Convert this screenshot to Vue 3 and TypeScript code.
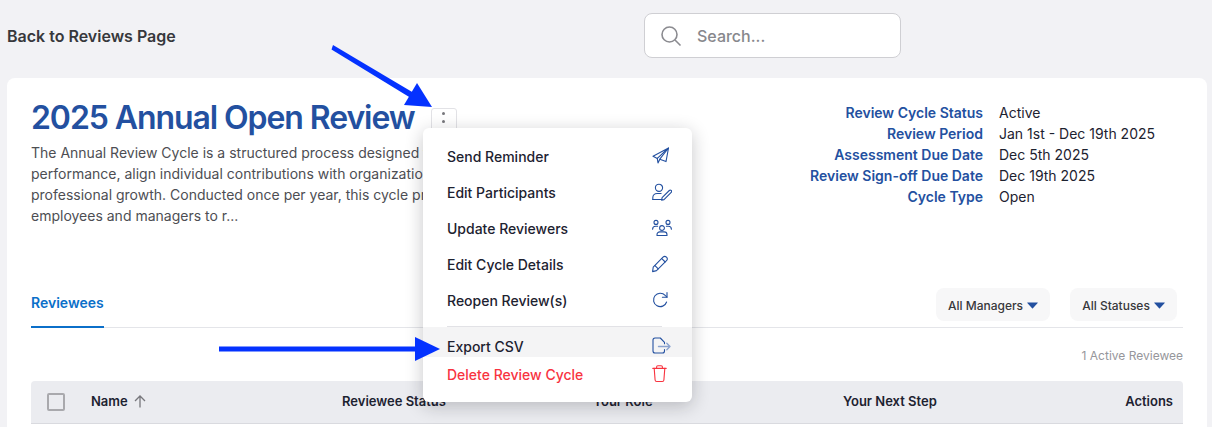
<script setup lang="ts">
interface MenuItem {
  label: string
  paths: string[]
}

const reviewMeta = [
  { label: 'Review Cycle Status', value: 'Active' },
  { label: 'Review Period', value: 'Jan 1st - Dec 19th 2025' },
  { label: 'Assessment Due Date', value: 'Dec 5th 2025' },
  { label: 'Review Sign-off Due Date', value: 'Dec 19th 2025' },
  { label: 'Cycle Type', value: 'Open' },
]

const menuItems: MenuItem[] = [
  {
    label: 'Send Reminder',
    paths: ['M16.5 1 1 9.2l4.3 2.2L16.5 1Z', 'M16.5 1 14 14.6l-6.2-2.4L16.5 1Z', 'M5.3 11.4 6 16l1.8-3.8'],
  },
  {
    label: 'Edit Participants',
    paths: [
      'M7 1.2a3.6 3.6 0 1 1 0 7.2 3.6 3.6 0 0 1 0-7.2Z',
      'M.8 16.5v-1.7c0-2.4 1.9-4.3 4.3-4.3h4',
      'M.8 16.5h9',
      'M12 16.6l-2.4.5.5-2.4 7.2-7.2a1.3 1.3 0 0 1 1.9 1.9L12 16.6Z',
    ],
  },
  {
    label: 'Update Reviewers',
    paths: [
      'M10 6.6a2.4 2.4 0 1 1 0 4.8 2.4 2.4 0 0 1 0-4.8Z',
      'M5 16.5v-.8c0-1.6 1.3-2.8 2.8-2.8h4.4c1.5 0 2.8 1.2 2.8 2.8v.8H5Z',
      'M4 1.4a2 2 0 1 1 0 4 2 2 0 0 1 0-4Z',
      'M16 1.4a2 2 0 1 1 0 4 2 2 0 0 1 0-4Z',
      'M.6 10.2c0-1.7 1.3-3 3-3h2',
      'M19.4 10.2c0-1.7-1.3-3-3-3h-2',
    ],
  },
  {
    label: 'Edit Cycle Details',
    paths: [
      'M1.2 12.2 11 2.2a2.4 2.4 0 0 1 3.5 3.4l-10 10-3.9 1 .6-4.4Z',
      'M9.8 3.6l3.4 3.4',
      'M3 10.6l3.2 3.2',
    ],
  },
  {
    label: 'Reopen Review(s)',
    paths: ['M14.6 11a6.7 6.7 0 1 1-1.4-6.6L15 6.2', 'M15 1.6v4.6h-4.6'],
  },
]

const exportPaths = ['M12.5 6.800V5.400L8.300 1H3a2 2 0 0 0-2 2v11a2 2 0 0 0 2 2h7.500a2 2 0 0 0 2-2v-1.500']
</script>

<template>
  <div class="page">
    <header class="top-bar">
      <span class="back-link">Back to Reviews Page</span>
      <label class="search">
        <svg class="search__icon" width="22" height="22" viewBox="0 0 22 22" fill="none">
          <circle cx="9.5" cy="9.5" r="7.5" />
          <path d="M15 15l5.5 5.5" />
        </svg>
        <input class="search__input" type="text" placeholder="Search..." />
      </label>
    </header>

    <main class="card">
      <section class="summary">
        <div class="summary__main">
          <div class="title-row">
            <h1 class="title">2025 Annual Open Review</h1>
            <button class="more-button" type="button" aria-label="More actions">
              <span></span><span></span><span></span>
            </button>
          </div>
          <p class="description">
            The Annual Review Cycle is a structured process designed to evaluate employee
            performance, align individual contributions with organizational goals, and foster
            professional growth. Conducted once per year, this cycle provides a chance for
            employees and managers to r...
          </p>
        </div>
        <dl class="meta">
          <template v-for="row in reviewMeta" :key="row.label">
            <dt class="meta__label">{{ row.label }}</dt>
            <dd class="meta__value">{{ row.value }}</dd>
          </template>
        </dl>
      </section>

      <nav class="tabs">
        <span class="tabs__active">Reviewees</span>
        <div class="filters">
          <button class="filter filter--managers" type="button">
            All Managers
            <svg width="11" height="7" viewBox="0 0 11 7"><path d="M.6.4h9.8a.4.4 0 0 1 .3.7L5.9 6.2a.5.5 0 0 1-.8 0L.3 1.1A.4.4 0 0 1 .6.4Z" /></svg>
          </button>
          <button class="filter filter--statuses" type="button">
            All Statuses
            <svg width="11" height="7" viewBox="0 0 11 7"><path d="M.6.4h9.8a.4.4 0 0 1 .3.7L5.9 6.2a.5.5 0 0 1-.8 0L.3 1.1A.4.4 0 0 1 .6.4Z" /></svg>
          </button>
        </div>
      </nav>

      <p class="count">1 Active Reviewee</p>

      <div class="table-head">
        <span class="checkbox"></span>
        <span class="table-head__name">
          Name
          <svg width="12" height="13" viewBox="0 0 12 13" fill="none"><path d="M6 12.5V1.2M1 6l5-5 5 5" /></svg>
        </span>
        <span>Reviewee Status</span>
        <span>Your Role</span>
        <span>Your Next Step</span>
        <span class="table-head__actions">Actions</span>
      </div>
    </main>

    <div class="menu">
      <div v-for="item in menuItems" :key="item.label" class="menu__item">
        <span>{{ item.label }}</span>
        <svg class="menu__icon" width="20" height="18" viewBox="0 0 20 18" fill="none">
          <path v-for="d in item.paths" :key="d" :d="d" />
        </svg>
      </div>
      <hr class="menu__divider" />
      <div class="menu__item menu__item--export">
        <span>Export CSV</span>
        <svg class="menu__icon" width="20" height="18" viewBox="0 0 20 18" fill="none">
          <path v-for="d in exportPaths" :key="d" :d="d" />
          <path class="menu__icon-faded" d="M6.500 9.500h11.500M14.800 6.300l3.200 3.200-3.200 3.200" />
        </svg>
      </div>
      <div class="menu__item menu__item--delete">
        <span>Delete Review Cycle</span>
        <svg class="menu__icon" width="20" height="18" viewBox="0 0 20 18" fill="none">
          <path d="M.8 3.4h13.4M4.6 3.200V2a1.200 1.200 0 0 1 1.200-1.200h3.400A1.200 1.200 0 0 1 10.400 2v1.200" />
          <path d="M2.200 3.400l.9 11.600a1.600 1.600 0 0 0 1.600 1.500h5.600a1.600 1.600 0 0 0 1.600-1.500l.9-11.600" />
        </svg>
      </div>
    </div>

    <svg class="annotations" width="1212" height="427" viewBox="0 0 1212 427">
      <path d="M333 45 413 92.500 L410 97.500 331.500 49.500Z" />
      <path d="M432 107 404 105 417 83Z" />
      <path d="M219 346.500H416V351.500H219Z" />
      <path d="M440 349 415 337V361Z" />
    </svg>
  </div>
</template>

<style scoped>
.page {
  position: relative;
  width: 1212px;
  height: 427px;
  overflow: hidden;
  background: #f2f2f5;
  font-family: Inter, "Liberation Sans", sans-serif;
  color: #1d2230;
}

.top-bar {
  display: grid;
  grid-template-columns: 637px 257px;
  align-items: center;
  height: 78px;
  padding: 0 0 7px 7px;
  box-sizing: border-box;
}

.back-link {
  font-size: 16px;
  font-weight: 600;
  color: #37383c;
}

.search {
  display: flex;
  align-items: center;
  gap: 13px;
  height: 45px;
  padding-left: 15px;
  box-sizing: border-box;
  border: 1px solid #cfcfd3;
  border-radius: 8px;
  background: #ffffff;
}

.search__icon {
  flex: none;
  stroke: #8b8b90;
  stroke-width: 1.6;
}

.search__input {
  flex: 1;
  min-width: 0;
  border: 0;
  outline: 0;
  background: transparent;
  font: 500 16px Inter, "Liberation Sans", sans-serif;
}

.search__input::placeholder {
  color: #87878c;
  opacity: 1;
}

.card {
  height: 400px;
  margin: 0 5px 0 7px;
  padding: 20px 24px 0;
  border-radius: 8px;
  background: #ffffff;
}

.summary {
  display: grid;
  grid-template-columns: 1fr 373px;
  height: 184px;
}

.title-row {
  display: flex;
  align-items: flex-start;
  gap: 16px;
}

.title {
  margin: 0;
  font-size: 32px;
  line-height: 40px;
  letter-spacing: -1.08px;
  font-weight: 600;
  color: #2350a0;
  white-space: nowrap;
}

.more-button {
  display: flex;
  flex-direction: column;
  align-items: center;
  gap: 5px;
  width: 26px;
  height: 30px;
  margin-top: 10px;
  padding: 3px 0 0;
  border: 1px solid #e2e2e6;
  border-radius: 3px;
  background: #ffffff;
}

.more-button span {
  width: 3px;
  height: 3px;
  border-radius: 50%;
  background: #77777c;
}

.description {
  width: 590px;
  margin: 4px 0 0;
  font-size: 14px;
  line-height: 21px;
  color: #4d4e53;
}

.meta {
  display: grid;
  grid-template-columns: 173px 1fr;
  column-gap: 16px;
  align-content: start;
  margin: 4px 0 0;
  font-size: 14px;
  line-height: 21px;
}

.meta__label {
  font-weight: 600;
  text-align: right;
  color: #2350a0;
  white-space: nowrap;
}

.meta__value {
  margin: 0;
  color: #1d2230;
}

.tabs {
  display: flex;
  justify-content: space-between;
  align-items: stretch;
  height: 45px;
  border-bottom: 1px solid #e4e5e9;
}

.tabs__active {
  display: flex;
  align-items: flex-start;
  padding-top: 12px;
  box-sizing: border-box;
  height: 46px;
  margin-bottom: -1px;
  border-bottom: 2px solid #0b6fc9;
  font-size: 14px;
  line-height: 18px;
  font-weight: 600;
  color: #0b6fc9;
}

.filters {
  display: flex;
  gap: 20px;
  margin: 6px 6px 0 0;
}

.filter {
  display: flex;
  align-items: center;
  justify-content: center;
  gap: 4px;
  height: 33px;
  padding: 2px 0 0;
  border: 0;
  border-radius: 8px;
  background: #f7f7f8;
  font: 500 12px Inter, "Liberation Sans", sans-serif;
  color: #37383c;
}

.filter svg {
  fill: #2350a0;
}

.filter--managers {
  width: 114px;
}

.filter--statuses {
  width: 107px;
}

.count {
  margin: 0;
  padding-top: 20px;
  height: 53px;
  box-sizing: border-box;
  font-size: 12px;
  line-height: 15px;
  text-align: right;
  color: #96969b;
}

.table-head {
  display: grid;
  grid-template-columns: 44px 251px 251px 250px 1fr auto;
  align-items: center;
  height: 43px;
  padding: 0 10px 2px 16px;
  box-sizing: border-box;
  border-bottom: 1px solid #d9dadf;
  border-radius: 4px 4px 0 0;
  background: #ebecf0;
  font-size: 13px;
  font-weight: 600;
  color: #1d2230;
}

.checkbox {
  width: 18px;
  height: 18px;
  margin-top: 2px;
  box-sizing: border-box;
  border: 2px solid #a9a9ad;
  border-radius: 2px;
}

.table-head__name {
  display: flex;
  align-items: center;
  gap: 6px;
}

.table-head__name svg {
  stroke: #77777c;
  stroke-width: 1.3;
}

.menu {
  position: absolute;
  top: 128px;
  left: 423px;
  width: 269px;
  height: 274px;
  padding-top: 10px;
  box-sizing: border-box;
  border-radius: 6px;
  background: #ffffff;
  box-shadow: 0 4px 18px rgba(20, 22, 30, 0.24);
  font-size: 14px;
  font-weight: 500;
}

.menu__item {
  display: flex;
  justify-content: space-between;
  align-items: center;
  height: 36px;
  padding: 0 20px 0 24px;
}

.menu__icon {
  stroke: #2350a0;
  stroke-width: 1.1;
  stroke-linecap: round;
  stroke-linejoin: round;
}

.menu__icon-faded {
  stroke: #8ba3cf;
  stroke-width: 1.4;
}

.menu__divider {
  height: 1px;
  margin: 8px 30px 0 24px;
  border: 0;
  background: #e2e2e6;
}

.menu__item--export {
  height: 30px;
  padding-top: 8px;
  box-sizing: border-box;
  background: #f4f4f5;
}

.menu__item--delete {
  height: 34px;
  color: #f8333f;
}

.menu__item--delete .menu__icon {
  stroke: #f8333f;
}

.annotations {
  position: absolute;
  top: 0;
  left: 0;
  fill: #0432ff;
  pointer-events: none;
}
</style>
